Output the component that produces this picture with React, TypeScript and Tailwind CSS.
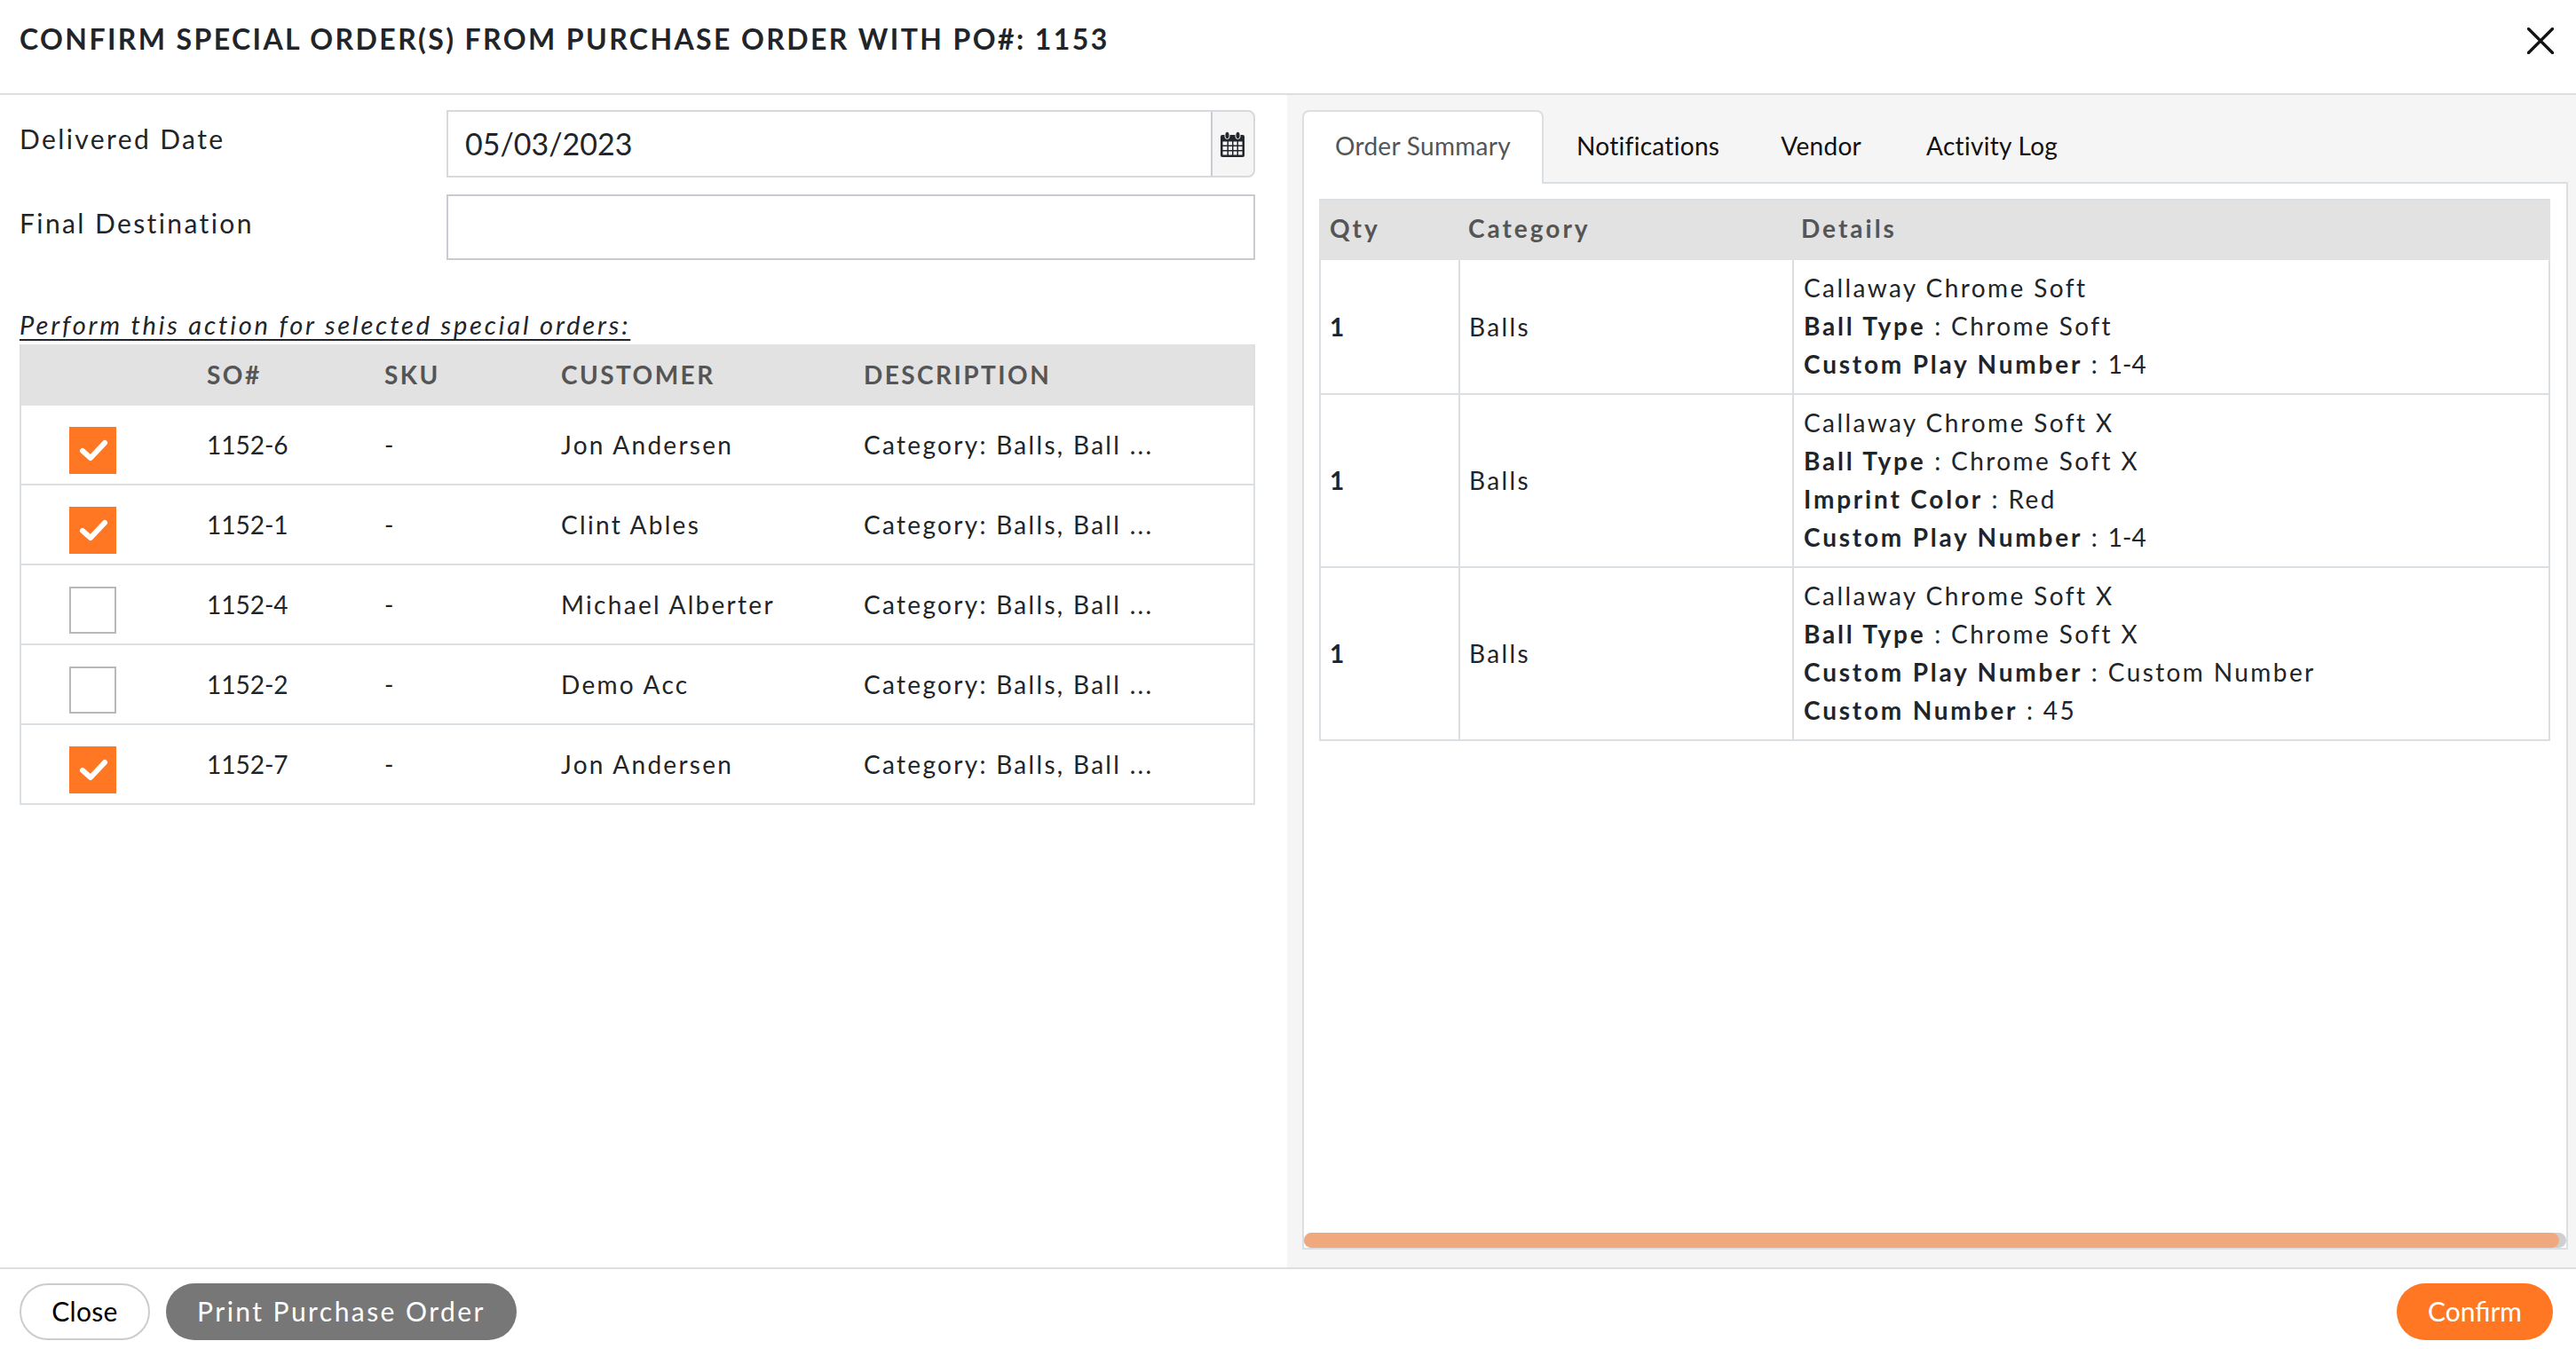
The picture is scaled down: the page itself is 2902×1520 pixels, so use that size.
const orders = [
  { so: "1152-6", customer: "Jon Andersen", checked: true },
  { so: "1152-1", customer: "Clint Ables", checked: true },
  { so: "1152-4", customer: "Michael Alberter", checked: false },
  { so: "1152-2", customer: "Demo Acc", checked: false },
  { so: "1152-7", customer: "Jon Andersen", checked: true },
];

const summary = [
  {
    name: "Callaway Chrome Soft",
    details: [
      ["Ball Type", "Chrome Soft"],
      ["Custom Play Number", "1-4"],
    ],
  },
  {
    name: "Callaway Chrome Soft X",
    details: [
      ["Ball Type", "Chrome Soft X"],
      ["Imprint Color", "Red"],
      ["Custom Play Number", "1-4"],
    ],
  },
  {
    name: "Callaway Chrome Soft X",
    details: [
      ["Ball Type", "Chrome Soft X"],
      ["Custom Play Number", "Custom Number"],
      ["Custom Number", "45"],
    ],
  },
];

function Checkbox({ checked }: { checked: boolean }) {
  if (!checked) {
    return <div className="mt-[13px] h-[53px] w-[53px] border-2 border-[#b8b8b8] bg-white" />;
  }
  return (
    <div className="mt-[13px] h-[53px] w-[53px] bg-[#ff7723]">
      <svg viewBox="0 0 53 53" className="h-full w-full">
        <path d="M15 27l9 8 16-17" fill="none" stroke="#fff" strokeWidth="6" strokeLinecap="round" strokeLinejoin="round" />
      </svg>
    </div>
  );
}

function CalendarIcon() {
  return (
    <svg viewBox="0 0 27 29" className="h-[29px] w-[27px]">
      <path d="M2 4h23a2 2 0 0 1 2 2v21a2 2 0 0 1-2 2H2a2 2 0 0 1-2-2V6a2 2 0 0 1 2-2z" fill="#23272b" />
      <rect x="5" y="0.5" width="5" height="8" rx="2.5" fill="#23272b" stroke="#f5f5f5" strokeWidth="1" />
      <rect x="17" y="0.5" width="5" height="8" rx="2.5" fill="#23272b" stroke="#f5f5f5" strokeWidth="1" />
      <path d="M2.5 11.5h5v4h-5zM9 11.5h4v4H9zM14.5 11.5h4v4h-4zM20 11.5h4.500v4H20zM2.500 17h5v4h-5zM9 17h4v4H9zM14.500 17h4v4h-4zM20 17h4.500v4H20zM2.500 22.500h5v4h-5zM9 22.500h4v4H9zM14.500 22.500h4v4h-4zM20 22.500h4.500v4H20z" fill="#f5f5f5" />
    </svg>
  );
}

export default function App() {
  return (
    <div className="flex h-[1520px] w-[2902px] flex-col bg-white font-['Lato',sans-serif] text-[#212529]">
      <header className="flex h-[107px] shrink-0 items-start justify-between border-b-2 border-[#dadfe3] pl-[22px] pr-[25px]">
        <h1 className="mt-[24px] text-[32px] font-bold uppercase leading-[40px] tracking-[2.4px]">
          Confirm Special Order(s) from Purchase Order with PO#: 1153
        </h1>
        <svg viewBox="0 0 30 30" className="mt-[31px] h-[30px] w-[30px]">
          <path d="M1.500 1.500l27 27M28.500 1.500l-27 27" stroke="#111" strokeWidth="3.200" fill="none" strokeLinecap="round" />
        </svg>
      </header>

      <div className="flex min-h-0 flex-1">
        <section className="w-[1450px] shrink-0 px-[22px] pt-[17px]">
          <div className="flex h-[95px] items-start">
            <label className="mt-[12px] w-[481px] text-[30px] leading-[40px] tracking-[2.4px]">Delivered Date</label>
            <div className="flex h-[76px] w-[911px] rounded-r-[8px] border-2 border-[#d6dade] bg-[#f5f5f5]">
              <div className="flex flex-1 items-center border-r-2 border-[#c8ccd2] bg-white pb-[1px] pl-[19px] text-[34px]">05/03/2023</div>
              <div className="flex w-[46px] items-center justify-center pr-[2px]">
                <CalendarIcon />
              </div>
            </div>
          </div>
          <div className="flex h-[74px] items-start">
            <label className="mt-[12px] w-[481px] text-[30px] leading-[40px] tracking-[2.4px]">Final Destination</label>
            <div className="h-[74px] w-[911px] border-2 border-[#c8ccd2] bg-white" />
          </div>

          <p className="mb-[3px] mt-[54px] text-[29px] italic leading-[38px] tracking-[2.85px] underline underline-offset-[5px]">
            Perform this action for selected special orders:
          </p>

          <div className="w-[1392px] border-x-2 border-[#dadfe3]">
            <div className="grid h-[69px] grid-cols-[209px_200px_199px_341px_1fr] items-start bg-[#e2e2e2] pt-[16px] text-[28px] font-bold uppercase leading-[36px] tracking-[2.45px] text-[#555]">
              <span />
              <span>SO#</span>
              <span>SKU</span>
              <span>Customer</span>
              <span>Description</span>
            </div>
            {orders.map((o) => (
              <div
                key={o.so}
                className="grid h-[90px] grid-cols-[209px_200px_199px_341px_1fr] items-center border-b-2 border-[#dadfe3] text-[28px] tracking-[2.3px]"
              >
                <div className="flex pl-[54px]">
                  <Checkbox checked={o.checked} />
                </div>
                <span className="tracking-normal">{o.so}</span>
                <span>-</span>
                <span>{o.customer}</span>
                <span>Category: Balls, Ball ...</span>
              </div>
            ))}
          </div>
        </section>

        <section className="flex min-w-0 flex-1 flex-col bg-[#f5f5f5] pb-[20px] pl-[17px] pr-[9px] pt-[17px]">
          <nav className="relative z-10 flex h-[81px] shrink-0 items-start text-[28px] leading-[36px] tracking-[0.3px] text-[#111]">
            <div className="h-[83px] w-[272px] rounded-t-[8px] border-x-2 border-t-2 border-[#dadfe3] bg-white pl-[35px] pt-[20px] text-[#555]">Order Summary</div>
            <span className="ml-[37px] mt-[22px]">Notifications</span>
            <span className="ml-[69px] mt-[22px]">Vendor</span>
            <span className="ml-[73px] mt-[22px]">Activity Log</span>
          </nav>
          <div className="relative flex min-h-0 flex-1 flex-col border-2 border-[#dadfe3] bg-white pl-[17px] pr-[18px] pt-[17px]">
            <div className="grid h-[69px] shrink-0 grid-cols-[157px_376px_1fr] border-t-2 border-[#dadfe3] bg-[#e2e2e2] pt-[13px] text-[28px] font-bold leading-[36px] tracking-[3px] text-[#555]">
              <span className="pl-[12px]">Qty</span>
              <span className="pl-[11px]">Category</span>
              <span className="pl-[10px]">Details</span>
            </div>
            {summary.map((row, i) => (
              <div key={i} className="grid shrink-0 grid-cols-[157px_376px_1fr] border-x-2 border-b-2 border-[#dadfe3] text-[28px] leading-[43px] tracking-[2.4px]">
                <div className="flex items-center border-r-2 border-[#dadfe3] pl-[10px] font-bold">1</div>
                <div className="flex items-center border-r-2 border-[#dadfe3] pl-[10px]">Balls</div>
                <div className="pb-[11px] pl-[11px] pt-[10px]">
                  <div>{row.name}</div>
                  {row.details.map(([k, v]) => (
                    <div key={k}>
                      <b className="tracking-[2.8px]">{k}</b> : <span className={v === "1-4" ? "tracking-normal" : ""}>{v}</span>
                    </div>
                  ))}
                </div>
              </div>
            ))}
            <div className="absolute inset-x-0 bottom-0 h-[17px] rounded-full bg-[#cfcfcf]">
              <div className="mr-[8px] h-full rounded-full bg-[#f0a97f]" />
            </div>
          </div>
        </section>
      </div>

      <footer className="flex h-[92px] shrink-0 items-start justify-between border-t-2 border-[#dadfe3] pl-[22px] pr-[26px] pt-[16px] text-[30px]">
        <div className="flex gap-[18px]">
          <button className="h-[64px] w-[147px] rounded-full border-2 border-[#ccc] bg-white pb-[2px] tracking-[0.3px] text-black">Close</button>
          <button className="h-[64px] w-[395px] rounded-full bg-[#777] pb-[2px] tracking-[2.45px] text-white">Print Purchase Order</button>
        </div>
        <button className="h-[64px] w-[176px] rounded-full bg-[#ff7723] pb-[2px] text-white">Confirm</button>
      </footer>
    </div>
  );
}
